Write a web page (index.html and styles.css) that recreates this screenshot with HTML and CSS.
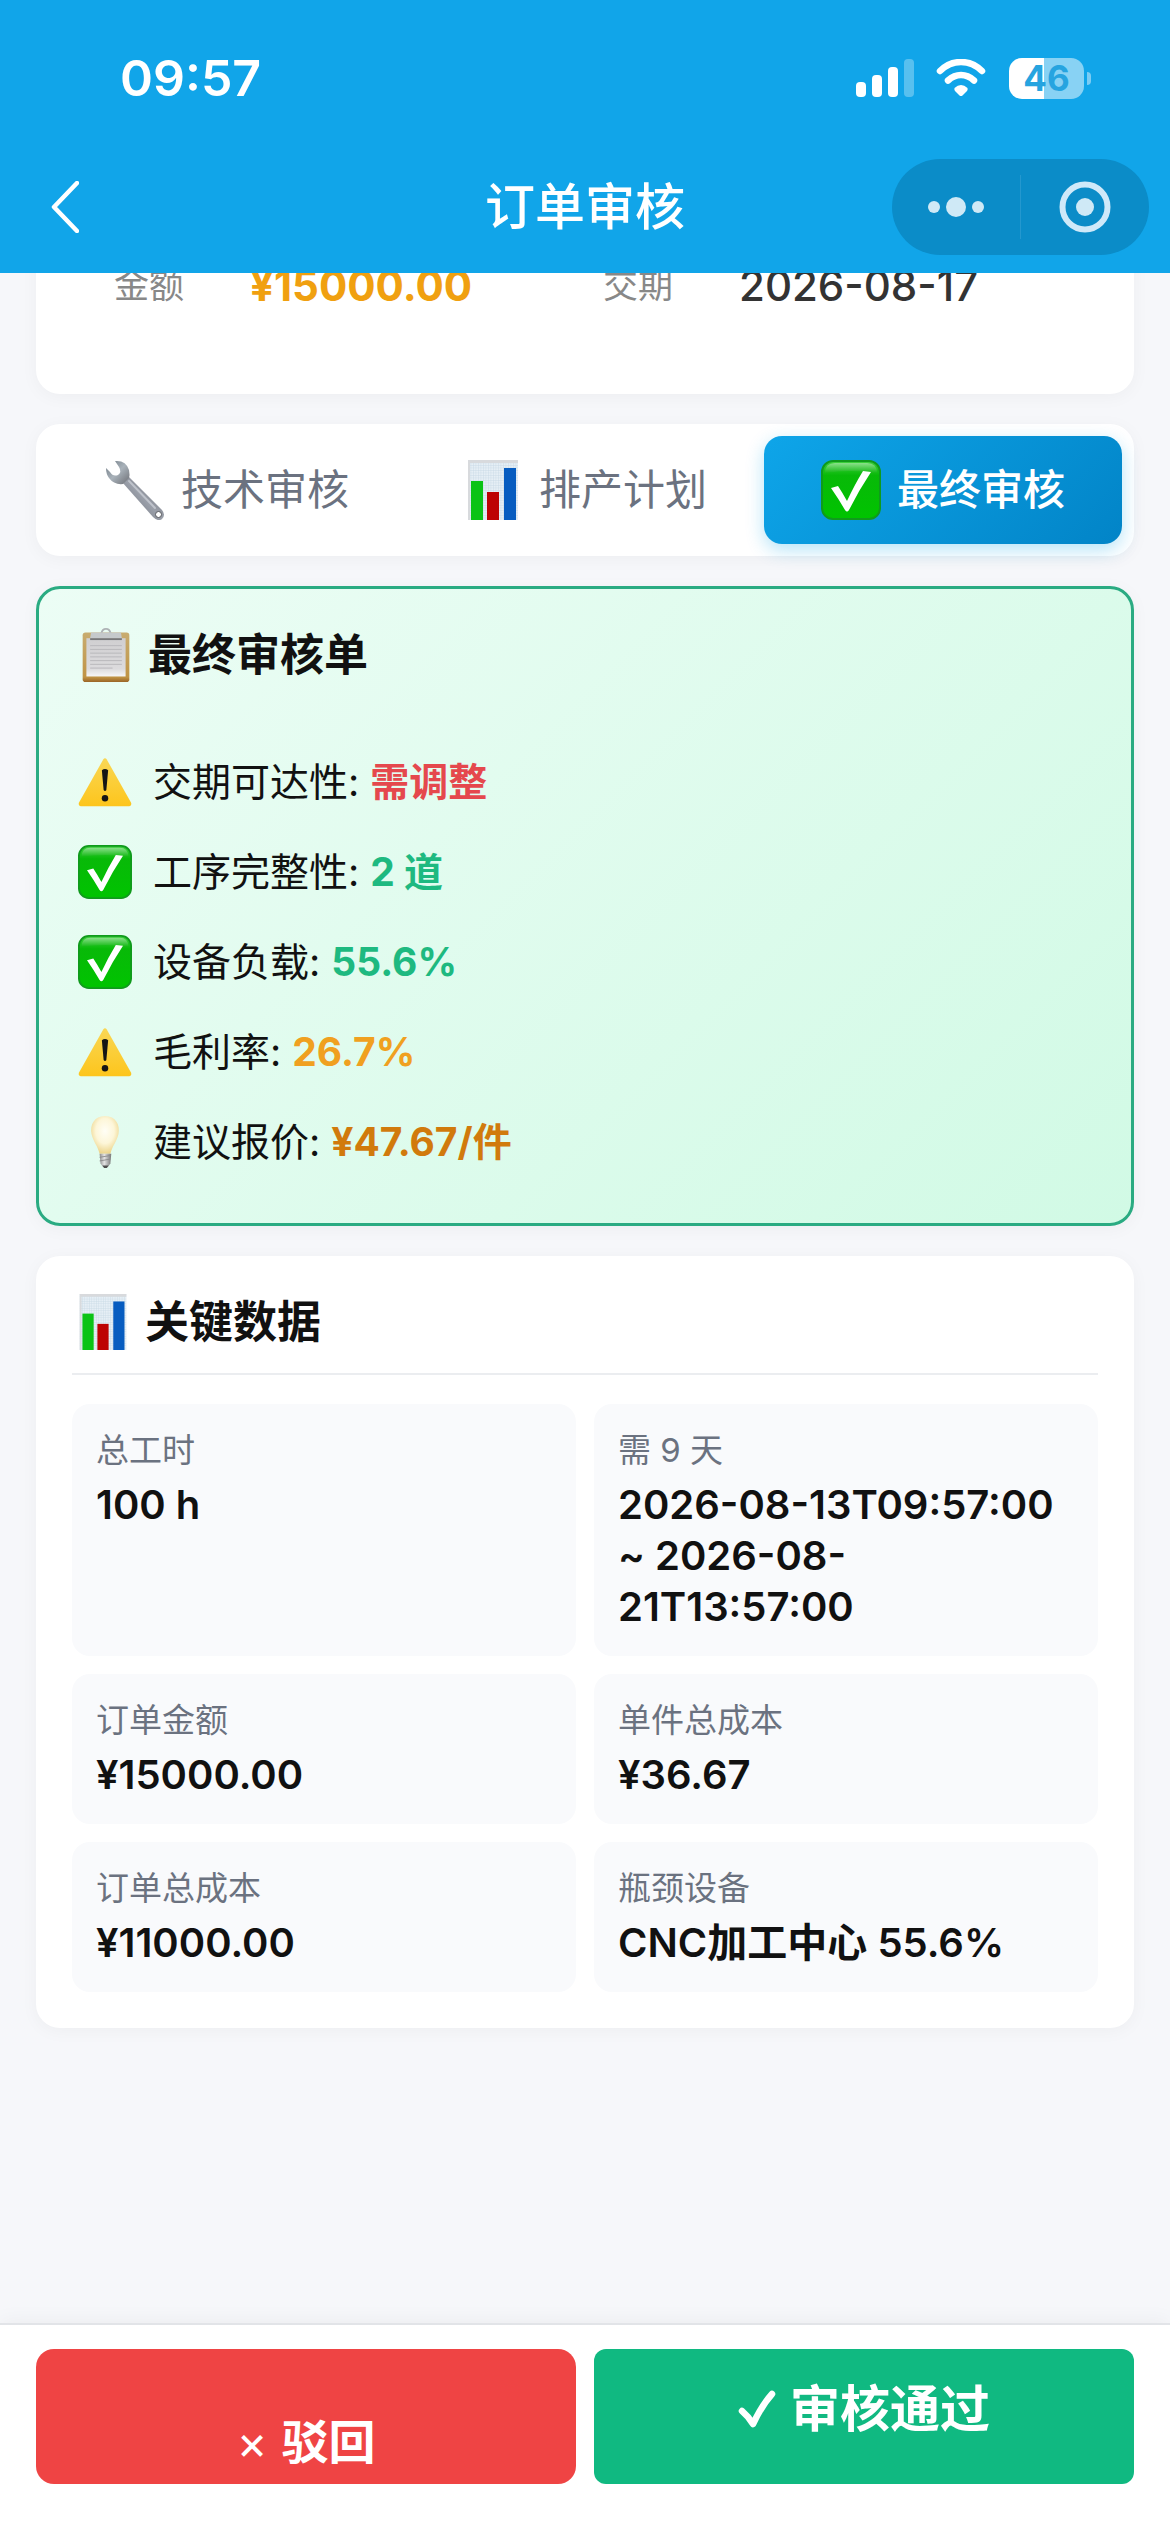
FILE: index.html
```html
<!DOCTYPE html>
<html lang="zh-CN">
<head>
    <meta charset="UTF-8">
    <meta name="viewport" content="width=device-width, initial-scale=1.0">
    <title>订单审核</title>
    <link rel="stylesheet" href="styles.css">
</head>
<body>
    <!-- shared icons -->
    <svg class="sprite" width="0" height="0" aria-hidden="true">
        <defs>
            <linearGradient id="g-green" x1="0" y1="0" x2="0" y2="1">
                <stop offset="0" stop-color="#3fd13f"/>
                <stop offset="0.25" stop-color="#08b908"/>
                <stop offset="1" stop-color="#00c400"/>
            </linearGradient>
            <linearGradient id="g-shine" x1="0" y1="0" x2="0" y2="1">
                <stop offset="0" stop-color="#8be08b"/>
                <stop offset="1" stop-color="#14b914"/>
            </linearGradient>
            <linearGradient id="g-yellow" x1="0" y1="0" x2="0" y2="1">
                <stop offset="0" stop-color="#f9d755"/>
                <stop offset="1" stop-color="#fdc51c"/>
            </linearGradient>
            <linearGradient id="g-steel" x1="0" y1="1" x2="1" y2="0">
                <stop offset="0" stop-color="#666a73"/>
                <stop offset="0.5" stop-color="#9a9fa9"/>
                <stop offset="1" stop-color="#6d6d73"/>
            </linearGradient>
            <linearGradient id="g-jaw" x1="0" y1="0" x2="1" y2="1">
                <stop offset="0" stop-color="#6f7a83"/>
                <stop offset="0.5" stop-color="#a9b2ba"/>
                <stop offset="1" stop-color="#6c6e74"/>
            </linearGradient>
            <linearGradient id="g-paper" x1="0" y1="0" x2="0" y2="1">
                <stop offset="0" stop-color="#d0cfd1"/>
                <stop offset="0.8" stop-color="#dcdbdd"/>
                <stop offset="1" stop-color="#f7f7f7"/>
            </linearGradient>
            <linearGradient id="g-board" x1="0" y1="0" x2="0" y2="1">
                <stop offset="0" stop-color="#c8ac70"/>
                <stop offset="0.9" stop-color="#c09445"/>
                <stop offset="1" stop-color="#9a6426"/>
            </linearGradient>
            <radialGradient id="g-bulb" cx="0.5" cy="0.4" r="0.6">
                <stop offset="0" stop-color="#fffef6"/>
                <stop offset="0.55" stop-color="#fdf6d8"/>
                <stop offset="1" stop-color="#ecd48a"/>
            </radialGradient>
            <linearGradient id="g-cap" x1="0" y1="0" x2="1" y2="0">
                <stop offset="0" stop-color="#8d8d8d"/>
                <stop offset="0.4" stop-color="#e4e4e4"/>
                <stop offset="1" stop-color="#777777"/>
            </linearGradient>
            <pattern id="p-grid" width="2.5" height="2.5" patternUnits="userSpaceOnUse">
                <rect width="2.5" height="2.5" fill="#e6eff6"/>
                <path d="M0 0H2.5M0 0V2.5" stroke="#c5d6e4" stroke-width="0.8"/>
            </pattern>
        </defs>
        <symbol id="i-check" viewBox="0 0 60 60">
            <rect x="1" y="1" width="58" height="58" rx="11" fill="url(#g-green)" stroke="#109a1c" stroke-width="2"/>
            <path d="M4 13Q4 3 14 3H46Q56 3 56 13Q30 9 4 13Z" fill="url(#g-shine)"/>
            <path d="M10 28L17 26Q21 32 26 41Q34 24 42 11L50 12Q38 30 28 50Q26 53 24 50Q17 38 10 28Z" fill="#fff"/>
        </symbol>
        <symbol id="i-warn" viewBox="0 0 60 60">
            <path d="M28 5Q30 2 32 5L59 53Q60 56 57 57H3Q0 56 1 53Z" fill="url(#g-yellow)"/>
            <path d="M26.500 17Q30 14 33.500 17L31.500 39Q30 41 28.500 39Z" fill="#151515"/>
            <circle cx="30" cy="48" r="3.6" fill="#151515"/>
        </symbol>
        <symbol id="i-chart" viewBox="0 0 60 60">
            <rect x="5" y="0" width="50" height="60" fill="url(#p-grid)"/>
            <path d="M5 0H55V3H5ZM5 0H7V60H5Z" fill="#d8dadd"/>
            <rect x="8" y="21" width="12" height="39" fill="#0bc315"/>
            <rect x="24" y="32" width="12" height="28" fill="#bd0303"/>
            <rect x="41" y="8" width="12" height="52" fill="#075cc0"/>
        </symbol>
        <symbol id="i-wrench" viewBox="0 0 60 60">
            <path d="M17 22L23 16L57 50Q61 55 57 59Q53 62 48 57Z" fill="url(#g-steel)"/>
            <path d="M10 1Q21 0 24 10Q25 15 24 18L18 24Q9 25 4 18Q1 14 1 8L5 12Q8 17 13 15Q17 12 14 7Z" fill="url(#g-jaw)"/>
            <path d="M24 21L50 48" stroke="#bfc3cb" stroke-width="2" stroke-linecap="round"/>
            <ellipse cx="53.5" cy="54.5" rx="3" ry="3" fill="#fff" stroke="#55575d" stroke-width="1"/>
        </symbol>
        <symbol id="i-board" viewBox="0 0 54 60">
            <rect x="2" y="6" width="50" height="53" rx="3" fill="url(#g-board)"/>
            <rect x="6" y="12" width="42" height="41" fill="url(#g-paper)"/>
            <path d="M10 20H44M10 24H44M10 28H44M10 32H44M10 36H44M10 40H44M10 44H34" stroke="#b7b6ba" stroke-width="1"/>
            <path d="M22 7Q23 2 27 2Q31 2 32 7" fill="none" stroke="#aeb2b5" stroke-width="2"/>
            <path d="M11 6H43L44 12H10Z" fill="#c5c9cb"/>
            <path d="M10 12H44V14H10Z" fill="#77787a"/>
        </symbol>
        <symbol id="i-bulb" viewBox="0 0 60 60">
            <path d="M30 1C18 1 13 11 15 21C17 30 22 34 24 43H36C38 34 43 30 45 21C47 11 42 1 30 1Z" fill="url(#g-bulb)"/>
            <path d="M24 43H37L36 54L33 58H28L25 54Z" fill="url(#g-cap)"/>
            <path d="M24 47L36 45M24 51L36 49" stroke="#8a8a8a" stroke-width="1"/>
            <path d="M27 56H34L32 59H29Z" fill="#4d4d4d"/>
        </symbol>
    </svg>

    <header class="header">
        <div class="status-bar">
            <span class="time">09:57</span>
            <div class="status-icons">
                <svg class="signal" viewBox="0 0 58 38" aria-hidden="true">
                    <g fill="#fff">
                        <rect x="0" y="23" width="10" height="15" rx="4"/>
                        <rect x="16" y="16" width="10" height="22" rx="4"/>
                        <rect x="32" y="8" width="10" height="30" rx="4"/>
                        <rect x="48" y="0" width="10" height="38" rx="4" opacity="0.3"/>
                    </g>
                </svg>
                <svg class="wifi" viewBox="0 0 50 38" aria-hidden="true">
                    <path d="M4 12Q13 3 25 3T46 12" fill="none" stroke="#fff" stroke-width="6.5" stroke-linecap="round"/>
                    <path d="M12 21.500Q18 16 25 16T38 21.500" fill="none" stroke="#fff" stroke-width="6.500" stroke-linecap="round"/>
                    <path d="M18.500 29Q25 23 31.500 29Q32 31 31 32L26.500 36.500Q25 37.500 23.500 36.500L19 32Q18 31 18.500 29Z" fill="#fff"/>
                </svg>
                <div class="battery"><span class="battery-level">46</span></div>
            </div>
        </div>
        <div class="nav">
            <button class="back" aria-label="返回">
                <svg viewBox="0 0 28 52" aria-hidden="true"><path d="M26 2L3 26L26 50" fill="none" stroke="#fff" stroke-width="4.500" stroke-linecap="round" stroke-linejoin="round"/></svg>
            </button>
            <h1 class="nav-title">订单审核</h1>
            <div class="capsule">
                <button aria-label="更多">
                    <svg width="58" height="24" viewBox="0 0 58 24" aria-hidden="true"><g fill="#cfe9f6"><circle cx="7" cy="12" r="6"/><circle cx="29" cy="12" r="10"/><circle cx="51" cy="12" r="6"/></g></svg>
                </button>
                <span class="capsule-line"></span>
                <button aria-label="关闭">
                    <svg width="52" height="52" viewBox="0 0 52 52" aria-hidden="true"><circle cx="26" cy="26" r="22.500" fill="none" stroke="#cfe9f9" stroke-width="6"/><circle cx="26" cy="26" r="9" fill="#cfe9f6"/></svg>
                </button>
            </div>
        </div>
    </header>

    <main class="main">
        <section class="card order-info">
            <div class="info-item">
                <span class="info-label">金额</span>
                <span class="info-value amount">¥15000.00</span>
            </div>
            <div class="info-item">
                <span class="info-label">交期</span>
                <span class="info-value">2026-08-17</span>
            </div>
        </section>

        <nav class="card tabs">
            <button class="tab"><svg class="tab-icon"><use href="#i-wrench"/></svg>技术审核</button>
            <button class="tab"><svg class="tab-icon"><use href="#i-chart"/></svg>排产计划</button>
            <button class="tab active"><svg class="tab-icon"><use href="#i-check"/></svg>最终审核</button>
        </nav>

        <section class="card final">
            <h2 class="card-title"><svg class="title-icon"><use href="#i-board"/></svg>最终审核单</h2>
            <ul class="check-list">
                <li><svg class="row-icon"><use href="#i-warn"/></svg><span>交期可达性: <b class="red">需调整</b></span></li>
                <li><svg class="row-icon"><use href="#i-check"/></svg><span>工序完整性: <b class="green">2 道</b></span></li>
                <li><svg class="row-icon"><use href="#i-check"/></svg><span>设备负载: <b class="green">55.6%</b></span></li>
                <li><svg class="row-icon"><use href="#i-warn"/></svg><span>毛利率: <b class="orange">26.7%</b></span></li>
                <li><svg class="row-icon"><use href="#i-bulb"/></svg><span>建议报价: <b class="brown">¥47.67/件</b></span></li>
            </ul>
        </section>

        <section class="card key-data">
            <h2 class="card-title"><svg class="title-icon"><use href="#i-chart"/></svg>关键数据</h2>
            <div class="data-grid">
                <div class="data-item">
                    <div class="data-label">总工时</div>
                    <div class="data-value">100 h</div>
                </div>
                <div class="data-item">
                    <div class="data-label">需 9 天</div>
                    <div class="data-value">2026-08-13T09:57:00 ~ 2026-08-21T13:57:00</div>
                </div>
                <div class="data-item">
                    <div class="data-label">订单金额</div>
                    <div class="data-value">¥15000.00</div>
                </div>
                <div class="data-item">
                    <div class="data-label">单件总成本</div>
                    <div class="data-value">¥36.67</div>
                </div>
                <div class="data-item">
                    <div class="data-label">订单总成本</div>
                    <div class="data-value">¥11000.00</div>
                </div>
                <div class="data-item">
                    <div class="data-label">瓶颈设备</div>
                    <div class="data-value">CNC加工中心 55.6%</div>
                </div>
            </div>
        </section>
    </main>

    <footer class="footer">
        <button class="btn btn-reject"><span class="cross">×</span>驳回</button>
        <button class="btn btn-pass">
            <svg class="tick" viewBox="0 0 38 38" aria-hidden="true"><path d="M4 21Q10 26 15 34Q24 15 34 4" fill="none" stroke="#fff" stroke-width="6.500" stroke-linecap="round" stroke-linejoin="round"/></svg>审核通过
        </button>
    </footer>
</body>
</html>
```

FILE: styles.css
```css
*{
    box-sizing: border-box;
}
body{
    margin: 0;
    min-height: 100vh;
    display: flex;
    flex-direction: column;
    background-color: #f6f7fa;
    color: #111;
    font-family: Inter, "Noto Sans CJK SC", sans-serif;
    font-size: 39px;
}
button{
    border: none;
    padding: 0;
    background: none;
    color: inherit;
    font-family: inherit;
    cursor: pointer;
}
h1, h2, ul{
    margin: 0;
    padding: 0;
}
svg{
    display: block;
    flex: none;
}
.sprite{
    position: absolute;
}

/* header */
.header{
    position: sticky;
    top: 0;
    z-index: 2;
    background-color: #11a5e9;
    color: #fff;
}
.status-bar{
    display: flex;
    align-items: center;
    justify-content: space-between;
    height: 141px;
    padding: 15px 79px 0 120px;
}
.time{
    font-size: 50px;
    font-weight: 600;
    line-height: 60px;
}
.status-icons{
    display: flex;
    align-items: center;
}
.signal{
    width: 58px;
    height: 38px;
}
.wifi{
    width: 50px;
    height: 38px;
    margin: 0 23px 0 22px;
}
.battery{
    display: flex;
    align-items: center;
}
.battery::after{
    content: "";
    width: 4px;
    height: 13px;
    margin-left: 3px;
    border-radius: 0 4px 4px 0;
    background-color: #7dccf3;
}
.battery-level{
    width: 75px;
    border-radius: 13px;
    background: linear-gradient(90deg, #fff 47%, #88d2f4 47%);
    color: #26a4e0;
    font-size: 35px;
    font-weight: 700;
    line-height: 41px;
    text-align: center;
}
.nav{
    display: grid;
    grid-template-columns: 1fr auto 1fr;
    align-items: center;
    height: 132px;
    padding: 0 21px 0 51px;
}
.back{
    width: 28px;
    height: 52px;
}
.nav-title{
    /* evens out the side paddings */
    padding-right: 30px;
    font-size: 50px;
    font-weight: 500;
    line-height: 72px;
}
.capsule{
    justify-self: end;
    display: flex;
    align-items: center;
    width: 257px;
    height: 96px;
    border-radius: 48px;
    background-color: #0b8cc8;
}
.capsule button{
    flex: 1;
    display: flex;
    align-items: center;
    justify-content: center;
    height: 100%;
}
.capsule-line{
    width: 1px;
    height: 64px;
    background-color: #2498cf;
}

/* cards */
.main{
    flex: 1;
    display: flex;
    flex-direction: column;
    gap: 30px;
    padding: 0 36px 120px;
}
.card{
    border-radius: 24px;
    background-color: #fff;
    box-shadow: 0 3px 18px rgba(0, 0, 0, 0.04);
}
.order-info{
    display: grid;
    grid-template-columns: 1fr 1fr;
    column-gap: 36px;
    /* scrolled up under the header */
    margin-top: -51px;
    padding: 36px 78px 81px;
}
.info-item{
    display: flex;
    align-items: center;
    line-height: 55px;
}
.info-label{
    width: 136px;
    color: #888;
    font-size: 35px;
}
.info-value{
    color: #333;
    font-size: 42px;
    font-weight: 500;
}
.amount{
    color: #f0a010;
    font-weight: 700;
}

.tabs{
    display: flex;
    padding: 12px;
}
.tab{
    flex: 1;
    display: flex;
    align-items: center;
    justify-content: center;
    gap: 16px;
    height: 108px;
    border-radius: 18px;
    color: #6b7280;
    font-size: 42px;
    line-height: 54px;
}
.tab-icon{
    width: 60px;
    height: 60px;
}
.tab.active{
    background: linear-gradient(135deg, #0ea5e9, #0284c7);
    box-shadow: 0 6px 18px rgba(14, 165, 233, 0.3);
    color: #fff;
    font-weight: 500;
}

.card-title{
    display: flex;
    align-items: center;
    gap: 14px;
    font-size: 44px;
    font-weight: 700;
    line-height: 60px;
}
.title-icon{
    width: 56px;
    height: 56px;
}
.final{
    padding: 36px 39px;
    border: 3px solid #2aab82;
    background: linear-gradient(135deg, #ecfdf5, #d1fae5);
}
.check-list{
    margin-top: 52px;
    list-style: none;
}
.check-list li{
    display: flex;
    align-items: center;
    gap: 21px;
    height: 90px;
    line-height: 54px;
}
.row-icon{
    width: 54px;
    height: 54px;
}
.red{
    color: #e5484d;
}
.green{
    color: #1eb980;
}
.orange{
    color: #f0a020;
}
.brown{
    color: #d17a0c;
}

.key-data{
    padding: 36px;
}
.key-data .card-title{
    padding: 0 3px 21px;
    border-bottom: 2px solid #ebedf0;
}
.data-grid{
    display: grid;
    grid-template-columns: 1fr 1fr;
    gap: 18px;
    margin-top: 29px;
}
.data-item{
    padding: 24px;
    border-radius: 18px;
    background-color: #f9fafc;
}
.data-label{
    margin-bottom: 6px;
    color: #6b7280;
    font-size: 33px;
    line-height: 45px;
}
.data-value{
    font-size: 40px;
    font-weight: 600;
    line-height: 51px;
}

/* bottom actions */
.footer{
    position: sticky;
    bottom: 0;
    display: flex;
    gap: 18px;
    padding: 24px 36px 48px;
    border-top: 2px solid #e2e4e8;
    background-color: #fff;
    box-shadow: 0 -4px 18px rgba(0, 0, 0, 0.04);
}
.btn{
    flex: 1;
    display: flex;
    align-items: center;
    justify-content: center;
    gap: 14px;
    height: 135px;
    color: #fff;
    font-weight: 600;
    line-height: 60px;
}
.btn-reject{
    padding-top: 51px;
    border-radius: 18px;
    background-color: #ef4444;
    font-size: 47px;
}
.btn-pass{
    padding-bottom: 15px;
    border-radius: 12px;
    background-color: #10b981;
    font-size: 50px;
}
.cross{
    font-weight: 400;
}
.tick{
    width: 38px;
    height: 38px;
}
```
